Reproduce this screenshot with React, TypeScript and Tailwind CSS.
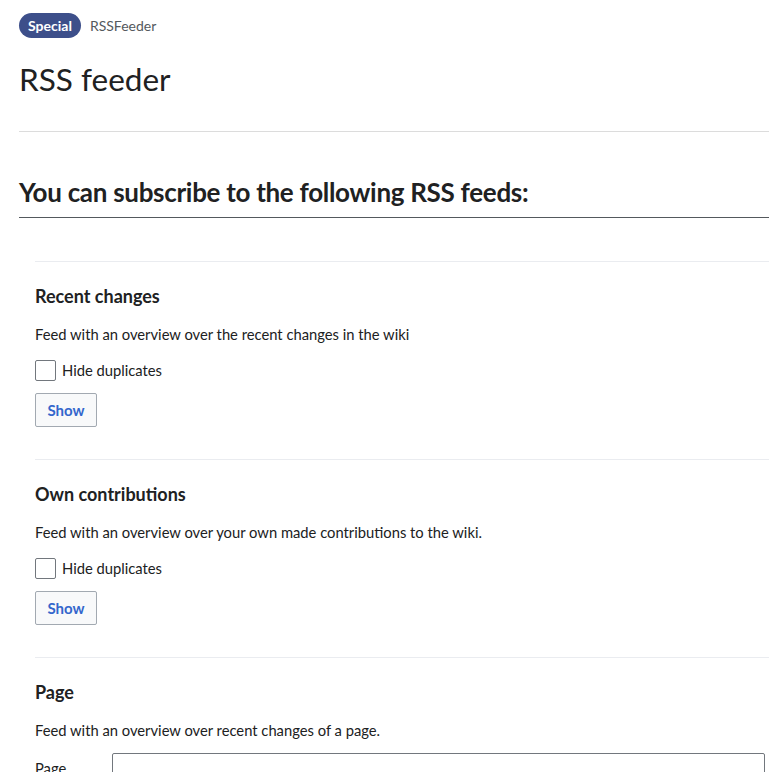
import React from "react";

interface FeedSection {
  title: string;
  description: string;
  hideDuplicates?: boolean;
  pageInput?: boolean;
}

const sections: FeedSection[] = [
  {
    title: "Recent changes",
    description: "Feed with an overview over the recent changes in the wiki",
    hideDuplicates: true,
  },
  {
    title: "Own contributions",
    description: "Feed with an overview over your own made contributions to the wiki.",
    hideDuplicates: true,
  },
  {
    title: "Page",
    description: "Feed with an overview over recent changes of a page.",
    pageInput: true,
  },
];

function Section({ section }: { section: FeedSection }) {
  return (
    <div className="border-t border-[#eaecf0] pt-[22px] pb-[32px]">
      <h3 className="text-[18px] font-bold leading-[24px] text-[#202122]">{section.title}</h3>
      <p className="mt-[15px] text-[14.75px] leading-[22px] text-[#202122]">{section.description}</p>
      {section.hideDuplicates && (
        <>
          <label className="mt-[14px] flex items-center gap-[6px] text-[14.75px] leading-[22px] text-[#202122]">
            <span className="w-[21px] h-[21px] rounded-[2px] border border-[#72777d] bg-white" />
            Hide duplicates
          </label>
          <button className="mt-[12px] h-[34px] px-[11.5px] rounded-[2px] border border-[#a2a9b1] bg-[#f8f9fa] text-[15px] font-bold text-[#3366cc]">
            Show
          </button>
        </>
      )}
      {section.pageInput && (
        <div className="mt-[12px] flex items-start">
          <span className="w-[77px] pt-[4px] text-[14.75px] leading-[22px] text-[#202122]">Page</span>
          <input className="h-[34px] flex-1 mr-[4px] rounded-[2px] border border-[#72777d] bg-white" />
        </div>
      )}
    </div>
  );
}

export default function App() {
  return (
    <div className="min-h-screen bg-white pl-[19px] pt-[13px] font-['Lato',sans-serif] text-[#202122]">
      <div className="flex items-center gap-[9px]">
        <span className="h-[25px] px-[9px] flex items-center rounded-full bg-[#3d4f8a] text-white text-[14px] font-bold">
          Special
        </span>
        <span className="text-[14px] text-[#54595d]">RSSFeeder</span>
      </div>
      <h1 className="mt-[21px] text-[31.5px] leading-[40px] font-normal text-[#202122]">RSS feeder</h1>
      <div className="mt-[32px] border-t border-[#dcdcdc]" />
      <h2 className="mt-[43px] pb-[8px] text-[26px] leading-[34px] font-bold tracking-[-0.3px] border-b border-[#54595d]">
        You can subscribe to the following RSS feeds:
      </h2>
      <div className="mt-[43px] pl-[16px]">
        {sections.map((section) => (
          <Section key={section.title} section={section} />
        ))}
      </div>
    </div>
  );
}
